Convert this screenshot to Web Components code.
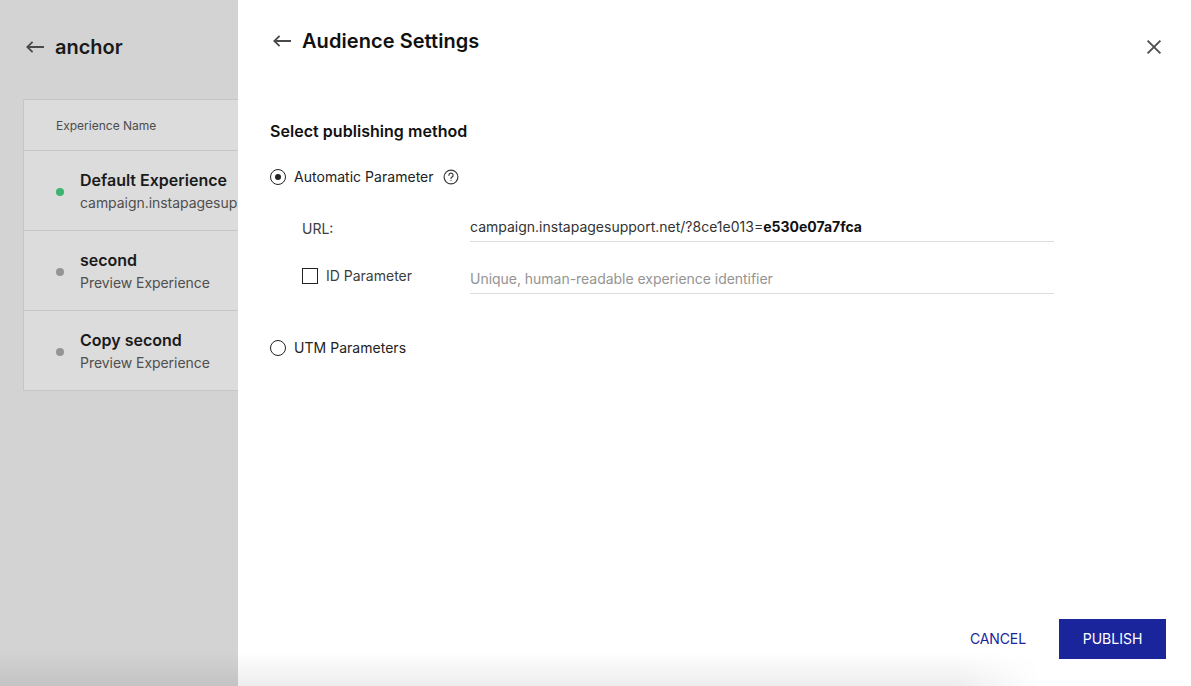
<!DOCTYPE html>
<html><head><meta charset="utf-8"><title>Audience Settings</title>
<style>
html,body{margin:0;height:100%;overflow:hidden}
body{font-family:Inter,"Liberation Sans",sans-serif;color:#111}
</style></head><body>
<app-shell>
  <experience-panel slot="back" title-text="anchor">
    <experience-row status="live" name="Default Experience" sub="campaign.instapagesupport.net"></experience-row>
    <experience-row name="second" sub="Preview Experience"></experience-row>
    <experience-row name="Copy second" sub="Preview Experience"></experience-row>
  </experience-panel>
  <audience-drawer slot="drawer"></audience-drawer>
</app-shell>
<script>
const arrow=(c)=>`<svg class="arrow" width="18" height="12" viewBox="0 0 18 12" fill="none" stroke="${c}" stroke-width="1.8"><path d="M1.2 6H18M6.6 .8 1.3 6l5.3 5.2"/></svg>`;
function def(name,html){
  customElements.define(name,class extends HTMLElement{
    constructor(){super();this.attachShadow({mode:'open'});}
    connectedCallback(){
      const a=k=>this.getAttribute(k)||'';
      this.shadowRoot.innerHTML=html(a);
    }
  });
}
def('app-shell',()=>`<style>
:host{display:flex;position:relative;width:1191px;height:686px;overflow:hidden;background:#d3d3d3}
.back{flex:0 0 238px;width:238px;overflow:hidden}
.drawer{flex:1;min-width:0}
.shade{position:absolute;left:0;bottom:0;width:1040px;height:34px;pointer-events:none;
 background:linear-gradient(to bottom,rgba(0,0,0,0),rgba(0,0,0,.07));
 -webkit-mask-image:linear-gradient(to right,#000 92%,transparent 100%);mask-image:linear-gradient(to right,#000 92%,transparent 100%)}
</style><div class="back"><slot name="back"></slot></div><div class="drawer"><slot name="drawer"></slot></div><div class="shade"></div>`);
def('experience-panel',a=>`<style>
:host{display:block;width:238px;height:686px;padding:33px 0 0 23px;box-sizing:border-box;overflow:hidden}
.head{display:flex;align-items:center;gap:11px;height:28px;padding-left:3px;margin-bottom:38px}
.head svg{flex:none}
h1{margin:0;font:600 20px/28px Inter,sans-serif;color:#1a1a1a}
.card{width:400px;border:1px solid #c6c6c6;background:#dcdcdc;box-sizing:border-box}
.th{height:50px;display:flex;align-items:center;padding-left:32px;font:400 12px Inter,sans-serif;color:#4d4d4d}
</style><div class="head">${arrow('#4a4a4a')}<h1>${a('title-text')}</h1></div>
<div class="card"><div class="th">Experience Name</div><slot></slot></div>`);
def('experience-row',a=>`<style>
:host{display:flex;align-items:center;height:80px;box-sizing:border-box;border-top:1px solid #c6c6c6;padding-left:32px}
.dot{width:8px;height:8px;border-radius:50%;background:${a('status')=='live'?'#3cb371':'#949494'};margin-right:16px;flex:none;position:relative;top:1px}
.t{padding-top:2px}
.n{font:600 16px/20px Inter,sans-serif;color:#1a1a1a;white-space:nowrap}
.s{font:400 14px/20px Inter,sans-serif;letter-spacing:-.05px;color:#4f4f4f;white-space:nowrap;margin-top:3px}
</style><span class="dot"></span><div class="t"><div class="n">${a('name')}</div><div class="s">${a('sub')}</div></div>`);
def('radio-option',a=>`<style>
:host{display:flex;align-items:center;gap:8px;height:20px;font:400 14px/20px Inter,sans-serif;letter-spacing:.03px;color:#222}
.r{width:16px;height:16px;box-sizing:border-box;border:1.3px solid #222;border-radius:50%;display:flex;align-items:center;justify-content:center;flex:none}
.r i{width:6px;height:6px;border-radius:50%;background:#222;display:${a('checked')=='yes'?'block':'none'}}
</style><span class="r"><i></i></span><span>${a('label')}</span><slot></slot>`);
def('field-row',a=>`<style>
:host{display:flex;height:52px}
.l{width:168px;flex:none;display:flex;align-items:flex-end;height:100%;box-sizing:border-box;font:400 14px/20px Inter,sans-serif;color:#3d3d3d;padding-bottom:${a('lpad')||'4'}px}
.in{display:flex;align-items:center;gap:8px;height:20px}
.v{width:584px;height:100%;box-sizing:border-box;border-bottom:1px solid #dcdcdc;display:flex;align-items:flex-end;padding-bottom:4px;font:400 14px/20px Inter,sans-serif;color:#333;white-space:nowrap}
.c{width:16px;height:16px;box-sizing:border-box;border:1.3px solid #222;display:${a('check')=='yes'?'block':'none'};flex:none}
</style><div class="l"><div class="in"><span class="c"></span><span><slot name="label"></slot></span></div></div><div class="v"><slot></slot></div>`);
def('audience-drawer',()=>`<style>
:host{display:flex;flex-direction:column;height:686px;box-sizing:border-box;background:#fff;padding:27px 25px 27px 32px}
.top{display:flex;align-items:flex-start;height:28px}
.arrow{margin:8px 11px 0 3px;flex:none}
h2{margin:0;font:600 20px/28px Inter,sans-serif;letter-spacing:.06px;color:#111;flex:1}
.x{margin:12px 4px 0 0;flex:none;display:block}
h3{margin:0;font:600 16px/20px Inter,sans-serif;letter-spacing:.04px;color:#111;margin-top:66px}
.opts{margin-top:26px}
.fields{margin:3px 0 0 32px;display:flex;flex-direction:column}
.ph{color:#949494;letter-spacing:-.03px}
.utm{margin-top:44px}
.help{margin-left:1px}
b{font-weight:700;color:#111}
.foot{margin-top:auto;display:flex;align-items:center;justify-content:flex-end}
.cancel{font:400 14px/20px Inter,sans-serif;letter-spacing:-.1px;color:#1a259c;margin-right:33px}
.pub{width:107px;height:40px;background:#1a259c;color:#fff;display:flex;align-items:center;justify-content:center;font:400 14px/20px Inter,sans-serif}
</style>
<div class="top">${arrow('#4a4a4a')}<h2>Audience Settings</h2><svg class="x" width="16" height="16" viewBox="0 0 16 16" fill="none" stroke="#505050" stroke-width="1.9"><path d="M1.6 1.6l12.8 12.8M14.4 1.6 1.6 14.4"/></svg></div>
<h3>Select publishing method</h3>
<div class="opts"><radio-option checked="yes" label="Automatic Parameter"><svg class="help" width="16" height="16" viewBox="0 0 16 16" fill="none" stroke="#3d3d3d" stroke-width="1.2"><circle cx="8" cy="8" r="6.9"/><path d="M5.9 6.3A2.1 2.1 0 1 1 8.9 8.1C8.3 8.5 8 8.8 8 9.6" stroke-linecap="round"/><circle cx="8" cy="11.6" r=".6" fill="#3d3d3d" stroke="none"/></svg></radio-option></div>
<div class="fields">
<field-row lpad="3"><span slot="label">URL:</span><span>campaign.instapagesupport.net/?8ce1e013=<b>e530e07a7fca</b></span></field-row>
<field-row lpad="8" check="yes"><span slot="label">ID Parameter</span><span class="ph">Unique, human-readable experience identifier</span></field-row>
</div>
<div class="utm"><radio-option label="UTM Parameters"></radio-option></div>
<div class="foot"><span class="cancel">CANCEL</span><span class="pub">PUBLISH</span></div>
`);
</script>
</body></html>
